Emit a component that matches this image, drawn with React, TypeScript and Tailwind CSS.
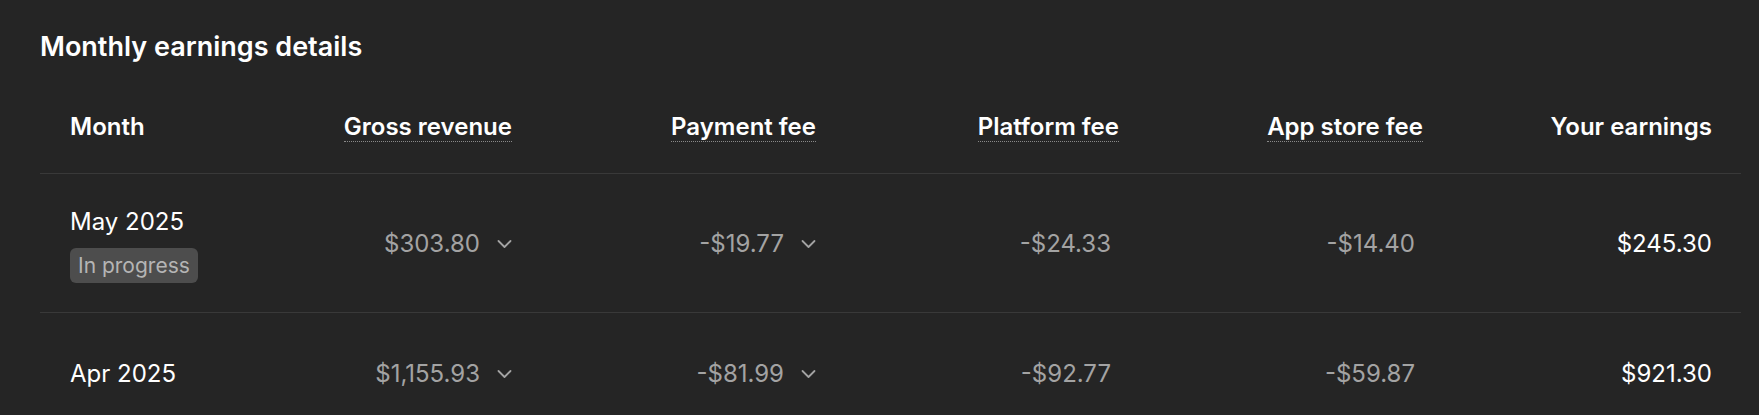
const rows = [
  {
    month: "May 2025",
    inProgress: true,
    gross: "$303.80",
    payment: "-$19.77",
    platform: "-$24.33",
    appStore: "-$14.40",
    earnings: "$245.30",
  },
  {
    month: "Apr 2025",
    inProgress: false,
    gross: "$1,155.93",
    payment: "-$81.99",
    platform: "-$92.77",
    appStore: "-$59.87",
    earnings: "$921.30",
  },
];

const cols = "grid grid-cols-[200px_242px_304px_303px_304px_289px] pl-[30px] pr-[29px]";

function Chevron() {
  return (
    <svg width="15" height="10" viewBox="0 0 15 10" fill="none" className="shrink-0">
      <path d="M1.5 2l6 6 6-6" stroke="#a3a3a3" strokeWidth="1.8" strokeLinecap="round" strokeLinejoin="round" />
    </svg>
  );
}

function HeadLabel({ children, tip = true }: { children: string; tip?: boolean }) {
  return (
    <span className={tip ? "border-b border-dotted border-[#8a8a8a]" : ""}>{children}</span>
  );
}

function Expandable({ value }: { value: string }) {
  return (
    <button className="flex items-center justify-end gap-[17px] text-[#a3a3a3]">
      <span>{value}</span>
      <Chevron />
    </button>
  );
}

export default function App() {
  return (
    <div className="min-h-screen bg-[#252525] pt-[29px] pl-[40px] pr-[18px] font-['Inter',sans-serif] text-white">
      <h2 className="text-[27px] leading-9 font-semibold">Monthly earnings details</h2>

      <div className="mt-[12px]">
        <div className={`${cols} pt-[32px] pb-[28px] border-b border-[#393939] text-[24px] leading-9 font-semibold`}>
          <div>Month</div>
          <div className="text-right"><HeadLabel>Gross revenue</HeadLabel></div>
          <div className="text-right"><HeadLabel>Payment fee</HeadLabel></div>
          <div className="text-right"><HeadLabel>Platform fee</HeadLabel></div>
          <div className="text-right"><HeadLabel>App store fee</HeadLabel></div>
          <div className="text-right"><HeadLabel tip={false}>Your earnings</HeadLabel></div>
        </div>

        {rows.map((r) => (
          <div
            key={r.month}
            className={`${cols} items-center min-h-[122px] pt-[30px] pb-[29px] border-b border-[#393939] text-[24px] leading-9`}
          >
            <div className="flex flex-col items-start">
              <span>{r.month}</span>
              {r.inProgress && (
                <span className="mt-2 h-[35px] px-2 flex items-center rounded-md bg-[#4d4d4d] text-[21px] text-[#b5b5b5]">
                  In progress
                </span>
              )}
            </div>
            <div className="flex justify-end"><Expandable value={r.gross} /></div>
            <div className="flex justify-end"><Expandable value={r.payment} /></div>
            <div className="text-right pr-2 text-[#a3a3a3]">{r.platform}</div>
            <div className="text-right pr-2 text-[#a3a3a3]">{r.appStore}</div>
            <div className="text-right">{r.earnings}</div>
          </div>
        ))}
      </div>
    </div>
  );
}
